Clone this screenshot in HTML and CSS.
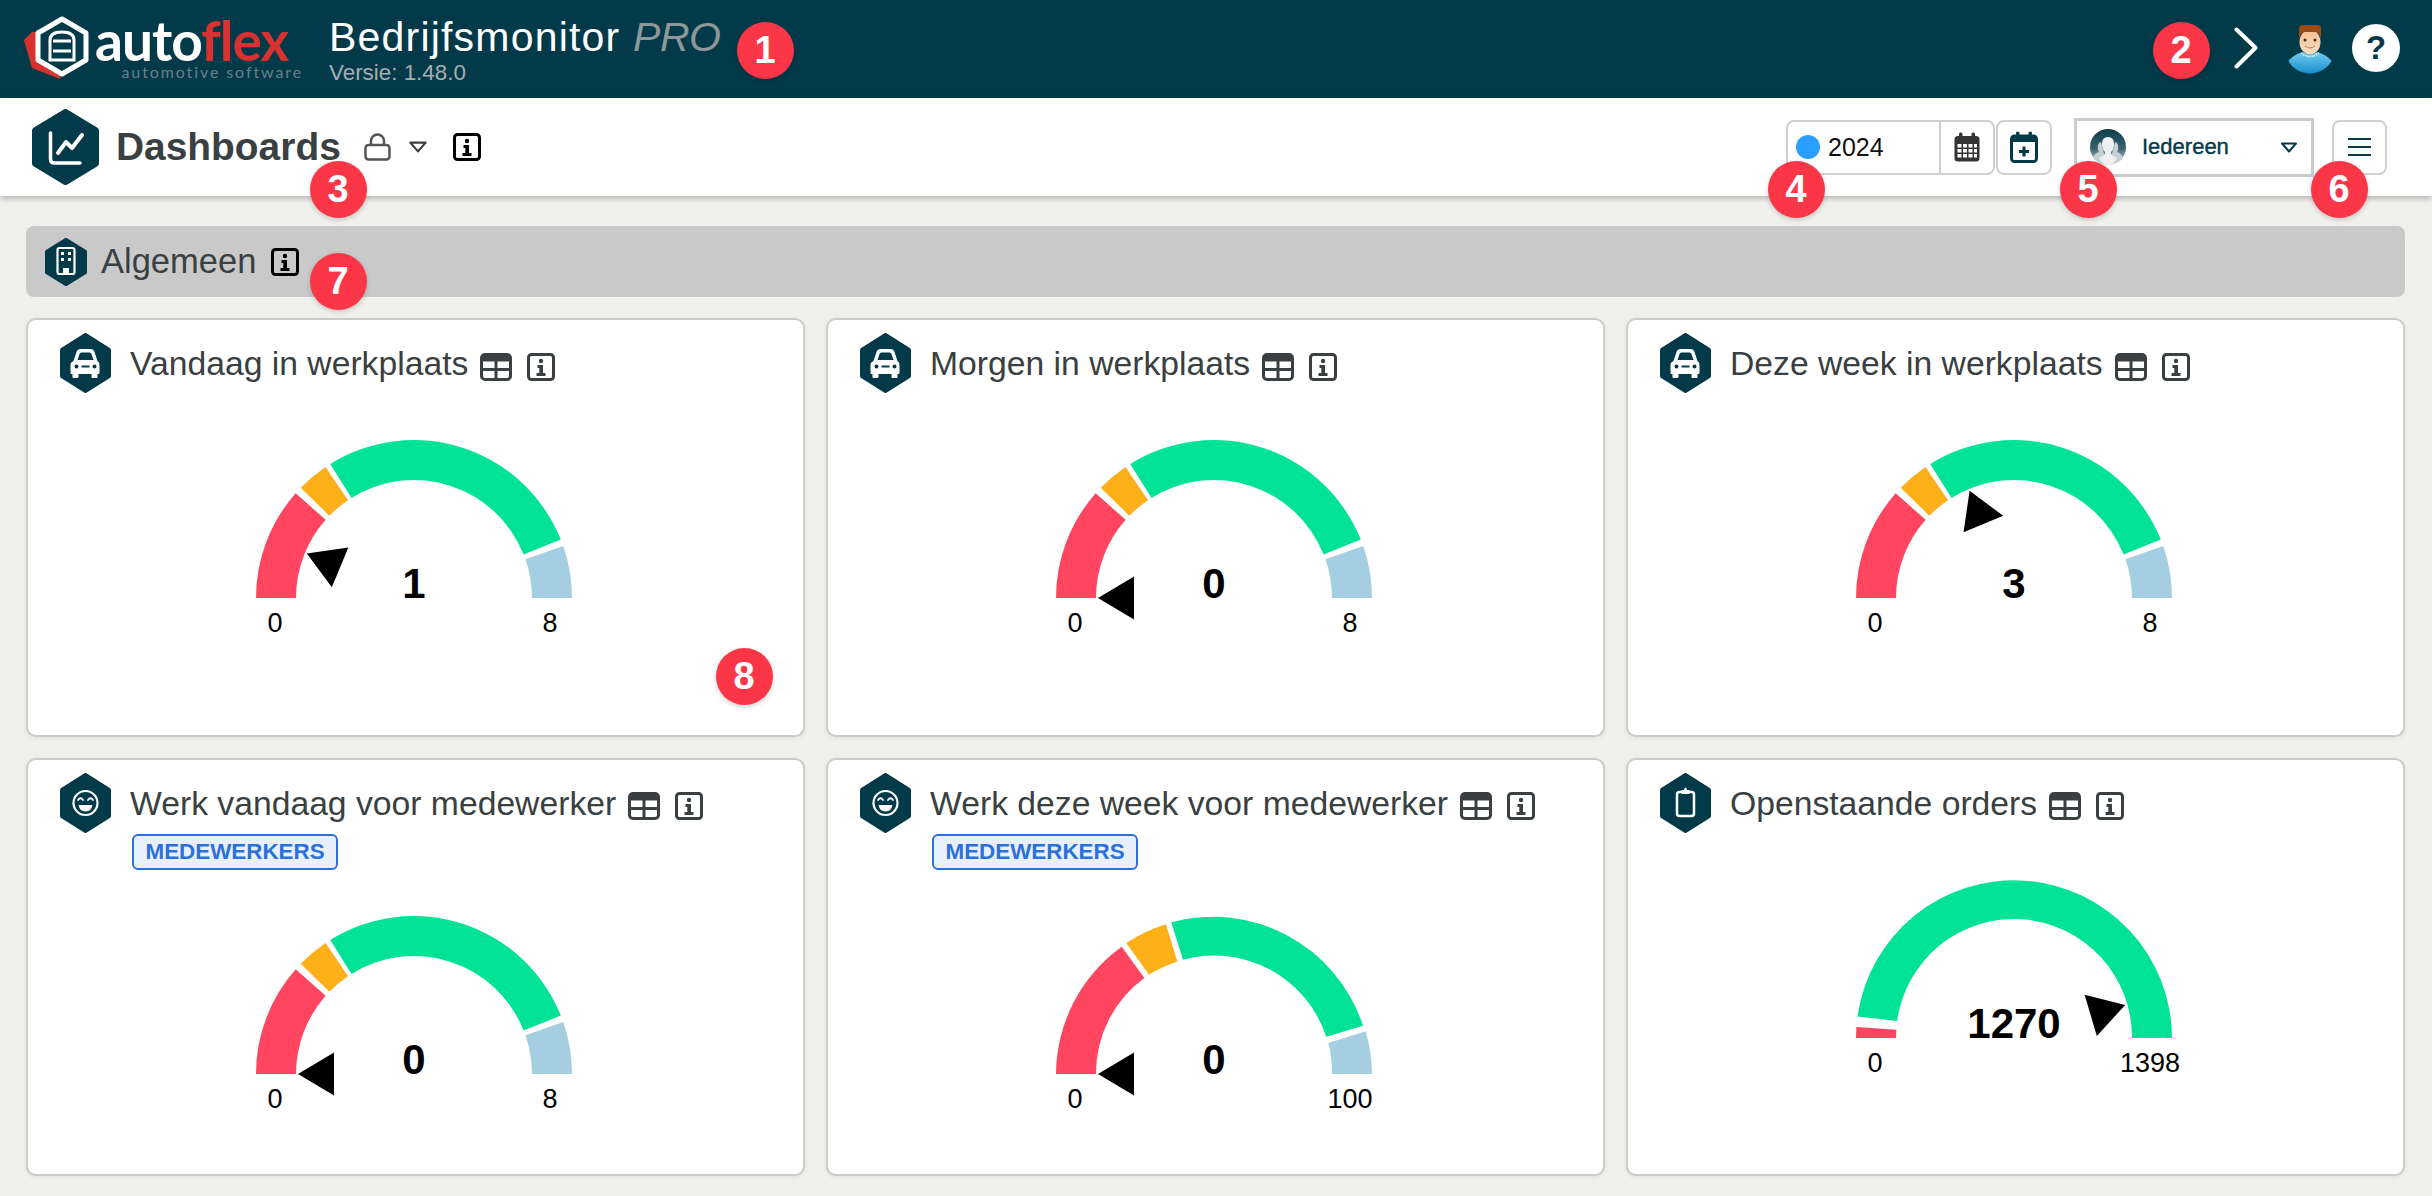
FILE: index.html
```html
<!DOCTYPE html>
<html lang="nl">
<head>
<meta charset="utf-8">
<title>Bedrijfsmonitor PRO</title>
<link rel="stylesheet" href="styles.css">
</head>
<body>
<svg class="defs" aria-hidden="true">
  <symbol id="hex" viewBox="0 0 50 60" preserveAspectRatio="none"><polygon points="25,2.5 47.5,17 47.5,43 25,57.5 2.5,43 2.5,17" fill="#033a4a" stroke="#033a4a" stroke-width="5" stroke-linejoin="round"/></symbol>
  <symbol id="info" viewBox="0 0 28 28"><rect x="1.5" y="1.5" width="25" height="25" rx="3" fill="none" stroke="currentColor" stroke-width="3"/><circle cx="14" cy="8" r="2.2" fill="currentColor"/><path d="M10.5 12h5.5v8h2.5v3h-9v-3h2.8v-5h-1.8z" fill="currentColor"/></symbol>
  <symbol id="table" viewBox="0 0 32 28"><rect x="1.5" y="1.5" width="29" height="25" rx="3.5" fill="none" stroke="currentColor" stroke-width="3"/><rect x="1.5" y="1.5" width="29" height="7" rx="2" fill="currentColor"/><path d="M1.5 16.5h29M16 8v18" stroke="currentColor" stroke-width="3" fill="none"/></symbol>
  <symbol id="car" viewBox="0 0 50 60"><path d="M13 28l3-9q1-3 4-3h10q3 0 4 3l3 9q2 1 2 4v8q0 1-1 1h-1v3q0 1-1 1h-4q-1 0-1-1v-3H18v3q0 1-1 1h-4q-1 0-1-1v-3h-1q-1 0-1-1v-8q0-3 3-4z" fill="#fff"/><path d="M17 27l2-6q.4-1.500 2-1.500h8q1.600 0 2 1.500l2 6z" fill="#033a4a"/><circle cx="16" cy="33.500" r="2" fill="#033a4a"/><circle cx="34" cy="33.500" r="2" fill="#033a4a"/><rect x="21" y="32.500" width="8" height="2" fill="#033a4a"/></symbol>
  <symbol id="smile" viewBox="0 0 50 60"><circle cx="25" cy="30" r="12" fill="none" stroke="#fff" stroke-width="2.200"/><path d="M17.500 27q2.500-3.500 5 0M27.500 27q2.500-3.500 5 0" fill="none" stroke="#fff" stroke-width="1.800" stroke-linecap="round"/><path d="M18 32h14q-1 6.500-7 6.500T18 32z" fill="#fff"/></symbol>
  <symbol id="clip" viewBox="0 0 50 60"><rect x="16.500" y="19" width="17" height="24" rx="2.500" fill="none" stroke="#fff" stroke-width="2.500"/><path d="M21 21v-4h2.500q.5-2.500 1.500-2.500t1.500 2.500H29v4z" fill="#fff"/></symbol>
  <symbol id="gauge-a" viewBox="-200 -160 400 200">
    <path class="seg-red" d="M-158 0A158 158 0 0 1-118.300-104.700L-88.400-78.200A118 118 0 0 0-118 0Z"/>
    <path class="seg-orange" d="M-113.300-110.200A158 158 0 0 1-88.400-131L-66-97.800A118 118 0 0 0-84.600-82.300Z"/>
    <path class="seg-green" d="M-83.700-134A158 158 0 0 1 146.800-58.400L109.600-43.600A118 118 0 0 0-62.500-100.100Z"/>
    <path class="seg-blue" d="M149.200-52A158 158 0 0 1 158 0L118 0A118 118 0 0 0 111.400-38.800Z"/>
  </symbol>
  <symbol id="gauge-b" viewBox="-200 -160 400 200">
    <path class="seg-red" d="M-158 0A158 158 0 0 1-92.300-127.300L-69.700-96A118 118 0 0 0-118 0Z"/>
    <path class="seg-orange" d="M-87.700-131A158 158 0 0 1-48-149.700L-36.700-112.300A118 118 0 0 0-65-99.300Z"/>
    <path class="seg-green" d="M-42.700-151.700A158 158 0 0 1 149-48.300L112.300-37.300A118 118 0 0 0-31-114.300Z"/>
    <path class="seg-blue" d="M151.700-42.700A158 158 0 0 1 158 0L118 0A118 118 0 0 0 114.300-31Z"/>
  </symbol>
  <symbol id="gauge-c" viewBox="-200 -160 400 200">
    <path class="seg-red" d="M-157.600-11L-117.700-8.200L-118 0L-158 0Z"/>
    <path class="seg-green" d="M-156.500-21.400A158 158 0 0 1 158 0L118 0A118 118 0 0 0-116.900-17Z"/>
  </symbol>
  <symbol id="needle" viewBox="-200 -160 400 200"><polygon points="-116,0 -80,-21.500 -80,21.500"/></symbol>
</svg>

<header class="topbar">
  <div class="logo">
    <svg class="logo-mark" viewBox="0 0 66 64" aria-hidden="true">
      <path d="M8 16L0 24L8 52L36 63L38 50L30 16Z" fill="#d6322f"/>
      <polygon points="38,3 62,17 62,44 38,58 14,44 14,17" fill="#033a4a" stroke="#fff" stroke-width="5" stroke-linejoin="round"/>
      <path d="M26 44V24q0-8 12-8t12 8v20z" fill="none" stroke="#fff" stroke-width="3"/>
      <path d="M29 25h18M29 35h18" stroke="#fff" stroke-width="3" fill="none"/>
    </svg>
    <div class="logo-text">
      <div class="logo-name">auto<em>flex</em></div>
      <div class="logo-sub">automotive software</div>
    </div>
  </div>
  <div class="app-title">
    <h1>Bedrijfsmonitor <i>PRO</i></h1>
    <p>Versie: 1.48.0</p>
  </div>
  <div class="top-actions">
    <svg class="chevron" viewBox="0 0 24 42" aria-hidden="true"><path d="M2.500 2.500L21.500 20.800L2.500 39.500" fill="none" stroke="#fff" stroke-width="4" stroke-linecap="round" stroke-linejoin="round"/></svg>
    <svg class="user" viewBox="0 0 46 51" aria-hidden="true">
      <defs>
        <linearGradient id="shirt" x1="0" y1="0" x2="0" y2="1"><stop offset="0" stop-color="#72cdf2"/><stop offset="1" stop-color="#178dcb"/></linearGradient>
        <linearGradient id="skin" x1="0" y1="0" x2="0" y2="1"><stop offset="0" stop-color="#f6be8f"/><stop offset="1" stop-color="#fde0c3"/></linearGradient>
      </defs>
      <path d="M1.500 38C5 33 12 30 16 29Q23 34 30 29C34 30 41 33 44.500 38C41 45 32 50.500 23 50.500C14 50.500 5 45 1.500 38Z" fill="url(#shirt)"/>
      <path d="M14 30Q23 37 32 30" fill="none" stroke="#dff3fb" stroke-width="1.500" stroke-dasharray="1.500 .8"/>
      <ellipse cx="23" cy="19" rx="10.500" ry="12.500" fill="url(#skin)"/>
      <path d="M12 17V6Q12 2 16 2H30Q34 2 34 6V17Q33 10 29 9H17Q13 10 12 17Z" fill="#9c4a12"/>
      <circle cx="18" cy="17" r="1.500" fill="#4a2a14"/><circle cx="28" cy="17" r="1.500" fill="#4a2a14"/>
      <path d="M18 23Q23 27 28 23" fill="none" stroke="#b9774a" stroke-width="1"/>
    </svg>
    <div class="help">?</div>
  </div>
</header>

<div class="toolbar">
  <svg class="page-hex" aria-hidden="true"><use href="#hex"/></svg>
  <svg class="page-chart" viewBox="0 0 67 76" aria-hidden="true"><path d="M18.500 24V50q0 4 4 4H48" fill="none" stroke="#fff" stroke-width="3.500" stroke-linecap="round"/><path d="M26 44L34 33L40 39L50 26" fill="none" stroke="#fff" stroke-width="4" stroke-linejoin="round" stroke-linecap="round"/></svg>
  <h2 class="page-title">Dashboards</h2>
  <svg class="lock" viewBox="0 0 27 28" aria-hidden="true"><rect x="1.500" y="12" width="24" height="14.500" rx="3" fill="none" stroke="#555" stroke-width="2.500"/><path d="M7 12V8a6.500 6.500 0 0 1 13 0v4" fill="none" stroke="#555" stroke-width="2.500"/></svg>
  <svg class="caret" viewBox="0 0 18 11" aria-hidden="true"><polygon points="2,1.500 16,1.500 9,9.500" fill="none" stroke="#3a3f42" stroke-width="2" stroke-linejoin="round"/></svg>
  <svg class="info info-black" aria-hidden="true"><use href="#info"/></svg>

  <div class="tools">
    <div class="year-group">
      <div class="year-cell"><span class="dot"></span><span class="year">2024</span></div>
      <div class="cal-cell">
        <svg class="cal" viewBox="0 0 26 30" aria-hidden="true"><rect x="0.500" y="4" width="25" height="25.500" rx="3.500" fill="#333"/><rect x="5" y="0.500" width="3.500" height="6" rx="1.500" fill="#333"/><rect x="17.500" y="0.500" width="3.500" height="6" rx="1.500" fill="#333"/><path d="M3.500 12h4v3.500h-4zM9 12h4v3.500H9zM14.500 12h4v3.500h-4zM20 12h3v3.500h-3zM3.500 17h4v3.500h-4zM9 17h4v3.500H9zM14.500 17h4v3.500h-4zM20 17h3v3.500h-3zM3.500 22h4v3.500h-4zM9 22h4v3.500H9zM14.500 22h4v3.500h-4zM20 22h3v3.500h-3z" fill="#fff"/></svg>
      </div>
    </div>
    <button class="icon-btn add-btn" type="button" aria-label="Jaar toevoegen">
      <svg class="cal-add" viewBox="0 0 28 32" aria-hidden="true"><rect x="1.500" y="5" width="25" height="25.500" rx="3" fill="#fff" stroke="#033a4a" stroke-width="3"/><path d="M1.500 5h25v6h-25z" fill="#033a4a"/><rect x="6" y="0.500" width="3.500" height="7" rx="1.500" fill="#033a4a"/><rect x="18.500" y="0.500" width="3.500" height="7" rx="1.500" fill="#033a4a"/><path d="M14 15.500v10M9 20.500h10" stroke="#033a4a" stroke-width="3"/></svg>
    </button>
    <div class="people">
      <svg class="people-pic" viewBox="0 0 36 36" aria-hidden="true">
        <defs><linearGradient id="pp" x1="0" y1="0" x2="0" y2="1"><stop offset="0" stop-color="#0c3c4b"/><stop offset=".55" stop-color="#3a6370"/><stop offset="1" stop-color="#e4e7e8"/></linearGradient></defs>
        <circle cx="18" cy="18" r="18" fill="url(#pp)"/>
        <path d="M3 29q2-5 6-6q-2-3-1-7q1-3 3-3l3 12l-3 9q-5-1-8-5zM33 29q-2-5-6-6q2-3 1-7q-1-3-3-3l-3 12l3 9q5-1 8-5z" fill="#c6d0d3"/>
        <path d="M18 8q6 0 6 7q0 5-3 8v2l6 4q-4 7-9 7t-9-7l6-4v-2q-3-3-3-8q0-7 6-7z" fill="#eef1f2"/>
      </svg>
      <span class="people-name">Iedereen</span>
      <svg class="people-caret" viewBox="0 0 18 11" aria-hidden="true"><polygon points="2,1.500 16,1.500 9,9.500" fill="none" stroke="#033a4a" stroke-width="2" stroke-linejoin="round"/></svg>
    </div>
    <button class="icon-btn menu-btn" type="button" aria-label="Menu"><span></span><span></span><span></span></button>
  </div>
</div>

<main class="content">
  <section class="group-bar">
    <span class="group-hex">
      <svg class="fill" aria-hidden="true"><use href="#hex"/></svg>
      <svg class="over" viewBox="0 0 42 48" aria-hidden="true"><rect x="12.500" y="10" width="17" height="26" rx="2" fill="none" stroke="#fff" stroke-width="2.200"/><path d="M16 14h3v3h-3zM23 14h3v3h-3zM16 20h3v3h-3zM23 20h3v3h-3zM18 37v-7h6v7z" fill="#fff"/></svg>
    </span>
    <h3 class="group-title">Algemeen</h3>
    <svg class="info info-black" aria-hidden="true"><use href="#info"/></svg>
  </section>

  <div class="cards">
    <article class="card">
      <div class="card-head">
        <svg class="card-hex" aria-hidden="true"><use href="#hex"/></svg><svg class="card-glyph" aria-hidden="true"><use href="#car"/></svg>
        <div class="card-info"><div class="title-row"><h4>Vandaag in werkplaats</h4><svg class="mini-table" aria-hidden="true"><use href="#table"/></svg><svg class="mini-info" aria-hidden="true"><use href="#info"/></svg></div></div>
      </div>
      <svg class="gauge" viewBox="-200 -160 400 200"><use href="#gauge-a" x="-200" y="-160" width="400" height="200"/><use class="needle n-1" href="#needle" x="-200" y="-160" width="400" height="200"/><text class="value" y="0">1</text><text class="limit" x="-139" y="33.5">0</text><text class="limit" x="136" y="33.5">8</text></svg>
    </article>

    <article class="card">
      <div class="card-head">
        <svg class="card-hex" aria-hidden="true"><use href="#hex"/></svg><svg class="card-glyph" aria-hidden="true"><use href="#car"/></svg>
        <div class="card-info"><div class="title-row"><h4>Morgen in werkplaats</h4><svg class="mini-table" aria-hidden="true"><use href="#table"/></svg><svg class="mini-info" aria-hidden="true"><use href="#info"/></svg></div></div>
      </div>
      <svg class="gauge" viewBox="-200 -160 400 200"><use href="#gauge-a" x="-200" y="-160" width="400" height="200"/><use href="#needle" x="-200" y="-160" width="400" height="200"/><text class="value" y="0">0</text><text class="limit" x="-139" y="33.5">0</text><text class="limit" x="136" y="33.5">8</text></svg>
    </article>

    <article class="card">
      <div class="card-head">
        <svg class="card-hex" aria-hidden="true"><use href="#hex"/></svg><svg class="card-glyph" aria-hidden="true"><use href="#car"/></svg>
        <div class="card-info"><div class="title-row"><h4>Deze week in werkplaats</h4><svg class="mini-table" aria-hidden="true"><use href="#table"/></svg><svg class="mini-info" aria-hidden="true"><use href="#info"/></svg></div></div>
      </div>
      <svg class="gauge" viewBox="-200 -160 400 200"><use href="#gauge-a" x="-200" y="-160" width="400" height="200"/><use class="needle n-3" href="#needle" x="-200" y="-160" width="400" height="200"/><text class="value" y="0">3</text><text class="limit" x="-139" y="33.5">0</text><text class="limit" x="136" y="33.5">8</text></svg>
    </article>

    <article class="card">
      <div class="card-head">
        <svg class="card-hex" aria-hidden="true"><use href="#hex"/></svg><svg class="card-glyph" aria-hidden="true"><use href="#smile"/></svg>
        <div class="card-info"><div class="title-row"><h4>Werk vandaag voor medewerker</h4><svg class="mini-table" aria-hidden="true"><use href="#table"/></svg><svg class="mini-info" aria-hidden="true"><use href="#info"/></svg></div><span class="tag">MEDEWERKERS</span></div>
      </div>
      <svg class="gauge" viewBox="-200 -160 400 200"><use href="#gauge-a" x="-200" y="-160" width="400" height="200"/><use href="#needle" x="-200" y="-160" width="400" height="200"/><text class="value" y="0">0</text><text class="limit" x="-139" y="33.5">0</text><text class="limit" x="136" y="33.5">8</text></svg>
    </article>

    <article class="card">
      <div class="card-head">
        <svg class="card-hex" aria-hidden="true"><use href="#hex"/></svg><svg class="card-glyph" aria-hidden="true"><use href="#smile"/></svg>
        <div class="card-info"><div class="title-row"><h4>Werk deze week voor medewerker</h4><svg class="mini-table" aria-hidden="true"><use href="#table"/></svg><svg class="mini-info" aria-hidden="true"><use href="#info"/></svg></div><span class="tag">MEDEWERKERS</span></div>
      </div>
      <svg class="gauge" viewBox="-200 -160 400 200"><use href="#gauge-b" x="-200" y="-160" width="400" height="200"/><use href="#needle" x="-200" y="-160" width="400" height="200"/><text class="value" y="0">0</text><text class="limit" x="-139" y="33.5">0</text><text class="limit" x="136" y="33.5">100</text></svg>
    </article>

    <article class="card">
      <div class="card-head">
        <svg class="card-hex" aria-hidden="true"><use href="#hex"/></svg><svg class="card-glyph" aria-hidden="true"><use href="#clip"/></svg>
        <div class="card-info"><div class="title-row"><h4>Openstaande orders</h4><svg class="mini-table" aria-hidden="true"><use href="#table"/></svg><svg class="mini-info" aria-hidden="true"><use href="#info"/></svg></div></div>
      </div>
      <svg class="gauge" viewBox="-200 -160 400 200"><use href="#gauge-c" x="-200" y="-160" width="400" height="200"/><use class="needle n-1270" href="#needle" x="-200" y="-160" width="400" height="200"/><text class="value" y="0">1270</text><text class="limit" x="-139" y="33.5">0</text><text class="limit" x="136" y="33.5">1398</text></svg>
    </article>
  </div>
</main>

<span class="badge b1">1</span>
<span class="badge b2">2</span>
<span class="badge b3">3</span>
<span class="badge b4">4</span>
<span class="badge b5">5</span>
<span class="badge b6">6</span>
<span class="badge b7">7</span>
<span class="badge b8">8</span>
</body>
</html>
```

FILE: styles.css
```css
* { box-sizing: border-box; }
html, body { margin: 0; padding: 0; }
body {
  position: relative;
  width: 2432px;
  height: 1196px;
  overflow: hidden;
  background: #f0f1ed;
  color: #3a3f42;
  font-family: "Liberation Sans", Arial, sans-serif;
}
h1, h2, h3, h4, p { margin: 0; font-weight: 400; }
.defs { position: absolute; width: 0; height: 0; }

/* top bar */
.topbar {
  display: flex;
  align-items: flex-start;
  height: 98px;
  padding: 0 32px 0 24px;
  background: #033a4a;
  color: #fff;
}
.logo { display: flex; width: 305px; padding-top: 16px; }
.logo-mark { width: 66px; height: 64px; flex: none; }
.logo-text { margin-left: 5px; width: 208px; }
.logo-name {
  font-family: Lato, sans-serif;
  font-weight: 700;
  font-size: 55px;
  line-height: 48px;
  height: 48px;
  color: #fff;
  white-space: nowrap;
  letter-spacing: -1px;
}
.logo-name em { font-style: normal; color: #d6322f; }
.logo-sub {
  font-family: Lato, sans-serif;
  font-size: 16px;
  line-height: 16px;
  letter-spacing: 1.9px;
  color: #668089;
  text-align: right;
  white-space: nowrap;
}
.app-title { padding-top: 14px; }
.app-title h1 {
  font-size: 41px;
  line-height: 46px;
  letter-spacing: 1.2px;
  color: #fff;
  white-space: nowrap;
}
.app-title h1 i { color: #8e9899; letter-spacing: -0.5px; }
.app-title p { font-size: 22.4px; line-height: 26px; color: #a5aeb0; }
.top-actions { display: flex; align-items: center; margin-left: auto; height: 96px; }
.chevron { width: 24px; height: 42px; margin-right: 29px; }
.user { width: 46px; height: 51px; margin-right: 19px; }
.help {
  width: 48px;
  height: 48px;
  border-radius: 50%;
  background: #fff;
  color: #033a4a;
  font-weight: 700;
  font-size: 33px;
  line-height: 48px;
  text-align: center;
}

/* toolbar */
.toolbar {
  position: relative;
  display: flex;
  align-items: center;
  height: 98px;
  padding: 0 45px 0 32px;
  background: #fff;
  box-shadow: 0 2px 6px rgba(0, 0, 0, .28);
}
.page-hex { width: 67px; height: 76px; flex: none; }
.page-chart { width: 67px; height: 76px; flex: none; margin-left: -67px; }
.page-title {
  margin-left: 17px;
  font-size: 38.9px;
  font-weight: 700;
  color: #3a3f42;
}
.lock { width: 27px; height: 28px; margin-left: 23px; }
.caret { width: 20px; height: 12px; margin-left: 17px; }
.info { color: #3a3f42; }
.info-black { width: 28px; height: 28px; color: #000; }
.toolbar .info-black { margin-left: 25px; }
.tools { display: flex; align-items: center; margin-left: auto; }
.year-group {
  display: flex;
  width: 209px;
  height: 55px;
  background: #fff;
  border: 2.500px solid #d0d0d0;
  border-radius: 8px;
}
.year-cell { display: flex; align-items: center; flex: 1; padding-left: 8px; }
.dot { width: 24px; height: 24px; border-radius: 50%; background: #2a9fff; }
.year { margin-left: 8px; font-size: 25px; color: #111; }
.cal-cell {
  display: flex;
  align-items: center;
  justify-content: center;
  width: 54px;
  border-left: 2.500px solid #d0d0d0;
}
.cal { width: 26px; height: 30px; }
.icon-btn {
  display: flex;
  align-items: center;
  justify-content: center;
  height: 55px;
  padding: 0;
  background: #fff;
  border: 2.500px solid #d0d0d0;
  border-radius: 8px;
}
.add-btn { width: 56px; margin-left: 1px; }
.cal-add { width: 28px; height: 32px; }
.people {
  display: flex;
  align-items: center;
  width: 240px;
  height: 59px;
  margin-left: 22px;
  padding: 0 13px;
  background: #fff;
  border: 3px solid #ccc;
}
.people-pic { width: 36px; height: 36px; flex: none; }
.people-name { margin-left: 16px; font-size: 22px; color: #033a4a; -webkit-text-stroke: .4px #033a4a; }
.people-caret { width: 18px; height: 11px; margin-left: auto; }
.menu-btn { flex-direction: column; gap: 5.500px; width: 55px; margin-left: 18px; }
.menu-btn span { display: block; width: 23px; height: 2.500px; background: #033a4a; }

/* content */
.content { padding: 30px 27px 0 26px; }
.group-bar {
  display: flex;
  align-items: center;
  height: 71px;
  padding-left: 19px;
  background: #c9c9c9;
  border-radius: 8px;
}
.group-hex { position: relative; display: block; width: 42px; height: 48px; flex: none; }
.group-hex .fill, .group-hex .over { display: block; position: absolute; left: 0; top: 0; width: 42px; height: 48px; }
.group-title { margin: 0 15px 0 14px; font-size: 34.500px; color: #3a3f42; }
.cards {
  display: grid;
  grid-template-columns: repeat(3, 1fr);
  grid-auto-rows: 418.500px;
  gap: 21px 21px;
  margin-top: 21px;
}
.card {
  background: #fff;
  border: 2px solid #cbcbc9;
  border-radius: 10px;
  box-shadow: 0 1px 4px rgba(0, 0, 0, .08);
}
.card-head { display: flex; align-items: flex-start; padding: 13px 0 0 32px; }
.card-hex { width: 51px; height: 60px; flex: none; }
.card-glyph { width: 51px; height: 60px; flex: none; margin-left: -51px; }
.card-info { margin-left: 19px; }
.title-row { display: flex; align-items: center; height: 61px; padding-top: 6px; }
.title-row h4 { margin-bottom: 6px; font-size: 33.700px; color: #3a3f42; white-space: nowrap; }
.mini-table { width: 32px; height: 28px; margin-left: 12px; color: #3a3f42; }
.mini-info { width: 28px; height: 28px; margin-left: 15px; color: #3a3f42; }
.tag {
  display: inline-block;
  height: 36px;
  margin-left: 2px;
  padding: 0 11.500px;
  background: #e9f0fb;
  border: 2px solid #2c70dd;
  border-radius: 6px;
  color: #2c70dd;
  font-size: 22.400px;
  font-weight: 700;
  line-height: 32px;
}
.gauge { display: block; width: 400px; height: 200px; margin: 44px 0 0 calc(50% - 201.500px); }
.seg-red { fill: #ff4560; }
.seg-orange { fill: #feb019; }
.seg-green { fill: #00e396; }
.seg-blue { fill: #a6cee3; }
.needle { transform-origin: 0 0; }
.n-1 { transform: rotate(22.5deg); }
.n-3 { transform: rotate(67.5deg); }
.n-1270 { transform: rotate(163.5deg); }
.value { font-size: 42px; font-weight: 700; text-anchor: middle; fill: #000; }
.limit { font-size: 27px; text-anchor: middle; fill: #000; }

/* numbered callouts */
.badge {
  position: absolute;
  width: 57px;
  height: 57px;
  margin: -28.500px 0 0 -28.500px;
  border-radius: 50%;
  background: #fb3646;
  box-shadow: 0 2px 5px rgba(0, 0, 0, .18);
  color: #fff;
  font-size: 38px;
  font-weight: 700;
  line-height: 57px;
  text-align: center;
}
.b1 { left: 765px; top: 50px; }
.b2 { left: 2181px; top: 50px; }
.b3 { left: 338px; top: 189px; }
.b4 { left: 1796px; top: 189px; }
.b5 { left: 2088px; top: 189px; }
.b6 { left: 2339px; top: 189px; }
.b7 { left: 338px; top: 281px; }
.b8 { left: 744px; top: 676px; }
```
